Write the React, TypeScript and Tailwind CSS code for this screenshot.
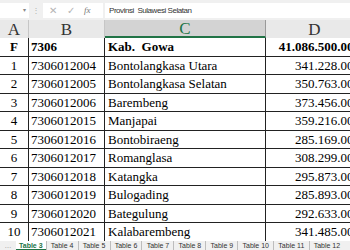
import React from "react";

const rows: [string, string, string, string][] = [
  ["1", "7306012004", "Bontolangkasa Utara", "341.228.000"],
  ["2", "7306012005", "Bontolangkasa Selatan", "350.763.000"],
  ["3", "7306012006", "Barembeng", "373.456.000"],
  ["4", "7306012015", "Manjapai", "359.216.000"],
  ["5", "7306012016", "Bontobiraeng", "285.169.000"],
  ["6", "7306012017", "Romanglasa", "308.299.000"],
  ["7", "7306012018", "Katangka", "295.873.000"],
  ["8", "7306012019", "Bulogading", "285.893.000"],
  ["9", "7306012020", "Bategulung", "292.633.000"],
  ["10", "7306012021", "Kalabarembeng", "341.485.000"],
];

const tabs = ["Table 4", "Table 5", "Table 6", "Table 7", "Table 8", "Table 9", "Table 10", "Table 11", "Table 12"];

export default function App() {
  const serif = { fontFamily: '"Liberation Serif", "Times New Roman", serif' };
  return (
    <div className="w-[350px] h-[250px] overflow-hidden bg-white relative" style={{ fontFamily: '"Liberation Sans", Arial, sans-serif' }}>
      {/* formula bar */}
      <div className="h-[20px] bg-[#f0f0f0] flex items-start pt-[3px]">
        <div className="w-[29px] h-[15px] bg-white flex items-center justify-end pr-[3px] text-[6px] text-[#888]">▾</div>
        <div className="w-[14px] flex justify-center text-[8px] text-[#b0b0b0] leading-[15px]">⋮</div>
        <div className="w-[60px] h-[15px] bg-white flex items-center text-[#b5b5b5]">
          <span className="ml-[6px] text-[10px] leading-none">✕</span>
          <span className="ml-[10px] text-[10px] leading-none">✓</span>
          <span className="ml-[9px] text-[9px] italic leading-none text-[#777]" style={serif}>fx</span>
        </div>
        <div className="ml-[2px] flex-1 h-[15px] bg-white flex items-center pl-[4px] text-[8px] tracking-[-0.45px] text-[#333] whitespace-pre">
          Provinsi  Sulawesi Selatan
        </div>
      </div>
      {/* column headers */}
      <div className="flex h-[18px] bg-[#e9e9e9] text-[17px] text-[#333] leading-none" style={serif}>
        <div className="w-[29px] shrink-0 flex items-center justify-center border-r border-[#c6c6c6]">A</div>
        <div className="w-[76px] shrink-0 flex items-center justify-center border-r border-[#c6c6c6]">B</div>
        <div className="w-[161px] shrink-0 flex items-center justify-center bg-[#d3d3d3] text-[#217346] border-b-2 border-[#217346] border-r border-r-[#9a9a9a]">C</div>
        <div className="w-[97px] shrink-0 flex items-center justify-center">D</div>
      </div>
      {/* grid */}
      <div className="text-[13px] text-black" style={serif}>
        <div className="flex h-[18.5px] border-b border-[#222] font-bold leading-none">
          <div className="w-[29px] shrink-0 border-r border-[#222] flex items-center justify-center">F</div>
          <div className="w-[76px] shrink-0 border-r border-[#222] flex items-center pl-[2px]">7306</div>
          <div className="w-[161px] shrink-0 border-r border-[#222] flex items-center pl-[3px] whitespace-pre">Kab.  Gowa</div>
          <div className="w-[97px] shrink-0 flex items-center justify-end pr-[3px]">41.086.500.000</div>
        </div>
        {rows.map((r) => (
          <div key={r[0]} className="flex h-[18.5px] border-b border-[#222] leading-none">
            <div className="w-[29px] shrink-0 border-r border-[#222] flex items-center justify-center">{r[0]}</div>
            <div className="w-[76px] shrink-0 border-r border-[#222] flex items-center pl-[2px]">{r[1]}</div>
            <div className="w-[161px] shrink-0 border-r border-[#222] flex items-center pl-[3px] whitespace-nowrap">{r[2]}</div>
            <div className="w-[97px] shrink-0 flex items-center justify-end pr-[3px]">{r[3]}</div>
          </div>
        ))}
      </div>
      {/* sheet tabs */}
      <div className="absolute left-0 right-0 bottom-0 h-[9px] bg-[#f0f0f0] flex items-center text-[7px] leading-none text-[#333] whitespace-nowrap">
        <span className="w-[16px] text-center text-[#888]">…</span>
        <span className="h-full px-[3px] bg-white text-[#217346] font-bold flex items-center border-b border-[#217346]">Table 3</span>
        {tabs.map((t) => (
          <span key={t} className="h-full px-[4.2px] flex items-center border-l border-[#bdbdbd]">{t}</span>
        ))}
      </div>
    </div>
  );
}
